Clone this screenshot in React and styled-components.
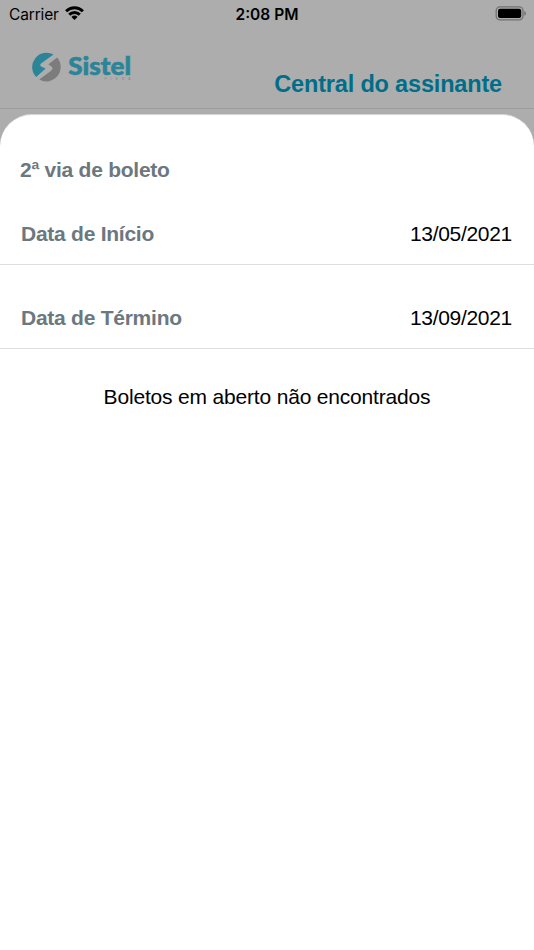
import styled, { createGlobalStyle } from "styled-components";

const dates = [
  { label: "Data de Início", value: "13/05/2021" },
  { label: "Data de Término", value: "13/09/2021" },
];

function WifiIcon() {
  return (
    <svg width="19" height="15" viewBox="0 0 19 15">
      <g fill="none" stroke="#000" strokeWidth="2.9">
        <path d="M1.1 5.2C5.9 0.5 13.1 0.5 17.9 5.2" />
        <path d="M4.2 8.6C7.2 5.7 11.8 5.7 14.8 8.6" />
      </g>
      <path d="M6.4 10.9Q9.5 8.3 12.6 10.9L9.5 14Z" />
    </svg>
  );
}

function BatteryIcon() {
  return (
    <svg width="31" height="16" viewBox="0 0 31 16">
      <rect
        x="1.2"
        y="0.9"
        width="26.8"
        height="13"
        rx="3.8"
        fill="none"
        stroke="#727272"
        strokeWidth="1.3"
      />
      <rect x="3" y="2.7" width="23.2" height="9.4" rx="2" />
      <path d="M29.3 5Q31 5.7 31 7.4T29.3 9.8Z" fill="#727272" />
    </svg>
  );
}

function Logo() {
  return (
    <svg width="102" height="34" viewBox="0 0 102 34">
      <path
        d="M5.3 27.1A14.3 14.3 0 0 1 22.5 4.6L10 13.4Q8.5 15 10 16.4L14.6 18.6Z"
        fill="#2c8498"
      />
      <path
        d="M26.1 7.6A14.3 14.3 0 0 1 8.3 29.5L20.4 20.4Q22.2 18.6 21 17L17.4 14.2Z"
        fill="#7c7c7c"
      />
      <LogoName x="37.2" y="25.2" textLength="62.8" lengthAdjust="spacingAndGlyphs">
        Sistel
      </LogoName>
      <LogoTag x="73.5" y="29.6" textLength="26">
        FIBRA
      </LogoTag>
    </svg>
  );
}

function App() {
  return (
    <>
      <GlobalStyle />
      <Screen>
        <StatusBar>
          <Carrier>
            Carrier
            <WifiIcon />
          </Carrier>
          <Clock>2:08 PM</Clock>
          <Battery>
            <BatteryIcon />
          </Battery>
        </StatusBar>

        <Header>
          <Logo />
          <PageTitle>Central do assinante</PageTitle>
        </Header>

        <Sheet>
          <SheetTitle>2ª via de boleto</SheetTitle>
          {dates.map(({ label, value }) => (
            <DateRow key={label}>
              <Label>{label}</Label>
              <Value>{value}</Value>
            </DateRow>
          ))}
          <EmptyMessage>Boletos em aberto não encontrados</EmptyMessage>
        </Sheet>
      </Screen>
    </>
  );
}

export default App;

const GlobalStyle = createGlobalStyle`
  * {
    box-sizing: border-box;
  }
  body {
    margin: 0;
    font-family: "Liberation Sans", Arial, sans-serif;
  }
  svg {
    display: block;
    flex-shrink: 0;
  }
`;

const Screen = styled.div`
  height: 950px;
  display: flex;
  flex-direction: column;
  overflow: hidden;
  background-color: #adadad;
`;

const StatusBar = styled.div`
  height: 28px;
  padding: 0 8px 0 9px;
  display: grid;
  grid-template-columns: 1fr auto 1fr;
  align-items: center;
  font-family: Inter, sans-serif;
  font-size: 15.5px;
  line-height: 28px;
  color: #000;
`;

const Carrier = styled.div`
  display: flex;
  align-items: center;
  gap: 6px;
  padding-top: 1px;
  letter-spacing: -0.15px;

  svg {
    margin-top: -3px;
  }
`;

const Clock = styled.div`
  padding-top: 1px;
  margin-right: 1px;
  font-weight: 600;
`;

const Battery = styled.div`
  display: flex;
  justify-content: flex-end;
  margin-top: -2px;
`;

const Header = styled.header`
  height: 81px;
  padding: 22px 32px 0 31px;
  display: flex;
  justify-content: space-between;
  border-bottom: 1px solid #9c9c9c;
`;

const LogoName = styled.text`
  font-family: Lato, sans-serif;
  font-size: 24.5px;
  font-weight: 900;
  fill: #2c8498;
  stroke: #2c8498;
  stroke-width: 0.6px;
`;

const LogoTag = styled.text`
  font-family: "Liberation Sans", Arial, sans-serif;
  font-size: 3.4px;
  fill: #868686;
`;

const PageTitle = styled.h1`
  margin: 20px 0 0;
  font-size: 23.5px;
  line-height: 28px;
  font-weight: bold;
  letter-spacing: -0.17px;
  white-space: nowrap;
  color: #006d89;
`;

const Sheet = styled.main`
  flex: 1;
  margin-top: 5px;
  padding-top: 41px;
  border-top: 1px solid #d6d6d6;
  border-radius: 32px 32px 0 0;
  background-color: #fff;
`;

const SheetTitle = styled.h2`
  margin: 0 0 21px 20px;
  font-size: 21px;
  line-height: 28px;
  font-weight: bold;
  letter-spacing: -0.25px;
  color: #6b7880;
`;

const DateRow = styled.div`
  height: 60px;
  padding: 15px 22px 0 21px;
  display: flex;
  justify-content: space-between;
  font-size: 21px;
  line-height: 28px;
  border-bottom: 1px solid #dedede;

  & + & {
    height: 84px;
    padding-top: 39px;
  }
`;

const Label = styled.span`
  font-weight: bold;
  letter-spacing: -0.25px;
  color: #6b7880;
`;

const Value = styled.span`
  letter-spacing: -0.3px;
  color: #000;
`;

const EmptyMessage = styled.p`
  margin: 34px 0 0;
  font-size: 21px;
  line-height: 28px;
  letter-spacing: -0.18px;
  text-align: center;
  color: #000;
`;
